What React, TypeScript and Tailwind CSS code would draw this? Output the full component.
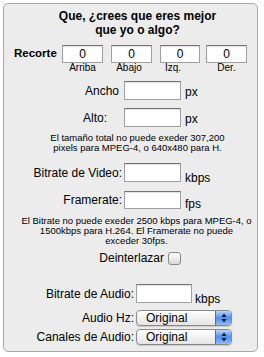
import type { ReactNode } from 'react';

const Box = ({ w, h, children }: { w: string; h: string; children?: ReactNode }) => (
  <div className={`${w} ${h} flex items-center justify-center border border-[#a0a0a0] border-t-[#737373] bg-white text-[12px] leading-none shadow-[inset_0_1px_1px_rgba(0,0,0,0.12)]`}>
    {children}
  </div>
);

const PopUp = () => (
  <div className="flex h-[16px] w-[96px] rounded-[4px] border border-[#8a8a8a] bg-gradient-to-b from-white to-[#e4e4e4] shadow-[0_1px_1px_rgba(0,0,0,0.15)]">
    <span className="flex-1 pl-[9px] text-[12px] leading-[14px]">Original</span>
    <span className="flex w-[16px] items-center justify-center rounded-r-[3px] border-l border-[#3f6fb8] bg-gradient-to-b from-[#b6d5fb] via-[#4d8ef0] to-[#8fbdf8]">
      <svg width="6" height="10" viewBox="0 0 6 10">
        <path d="M3 0.5 L5.6 4 L0.4 4 Z" fill="#101830" />
        <path d="M3 9.5 L5.6 6 L0.4 6 Z" fill="#101830" />
      </svg>
    </span>
  </div>
);

export default function App() {
  return (
    <div className="h-[357px] w-[264px] bg-white pl-[3px] pt-[3px] text-black" style={{ fontFamily: '"Liberation Sans", Arial, sans-serif' }}>
      <div className="h-[349px] w-[255px] rounded-[5px] border border-[#a9a9a9] bg-[#ececec]">
        <div className="mt-[5px] pl-[14px] text-center text-[12px] font-bold leading-[14px]">
          <div>Que, ¿crees que eres mejor</div>
          <div>que yo o algo?</div>
        </div>

        {/* recorte */}
        <div className="mt-[8px] flex pl-[10px]">
          <div className="flex h-[18px] w-[48px] items-center text-[11.5px] font-bold">Recorte</div>
          <div className="flex flex-col items-center">
            <Box w="w-[41px]" h="h-[18px]">0</Box>
            <span className="text-[10px] leading-[10px]">Arriba</span>
          </div>
          <div className="ml-[8px] flex flex-col items-center">
            <Box w="w-[41px]" h="h-[18px]">0</Box>
            <span className="pr-[5px] text-[10px] leading-[10px]">Abajo</span>
          </div>
          <div className="ml-[8px] flex flex-col items-center">
            <Box w="w-[40px]" h="h-[18px]">0</Box>
            <span className="pr-[14px] text-[10px] leading-[10px]">Izq.</span>
          </div>
          <div className="ml-[6px] flex flex-col items-center">
            <Box w="w-[41px]" h="h-[18px]">0</Box>
            <span className="text-[10px] leading-[10px]">Der.</span>
          </div>
        </div>

        <div className="mt-[8px] flex items-end">
          <span className="mb-[2px] w-[115px] text-right text-[12px] leading-[14px]">Ancho</span>
          <span className="ml-[5px]"><Box w="w-[57px]" h="h-[19px]" /></span>
          <span className="ml-[4px] mb-[1px] text-[12px] leading-[14px]">px</span>
        </div>
        <div className="mt-[8px] flex items-end">
          <span className="mb-[2px] w-[103px] text-right text-[12px] leading-[14px]">Alto:</span>
          <span className="ml-[17px]"><Box w="w-[57px]" h="h-[19px]" /></span>
          <span className="ml-[4px] mb-[1px] text-[12px] leading-[14px]">px</span>
        </div>

        <div className="mt-[6px] pl-[14px] text-center text-[9.5px] leading-[10px]">
          <div>El tamaño total no puede exeder 307,200</div>
          <div>pixels para MPEG-4, o 640x480 para H.</div>
        </div>

        <div className="mt-[10px] flex items-center">
          <span className="w-[118px] text-right text-[12px] leading-[14px]">Bitrate de Video:</span>
          <span className="ml-[2px]"><Box w="w-[57px]" h="h-[19px]" /></span>
          <span className="mb-[-3px] ml-[4px] self-end text-[12px] leading-[14px]">kbps</span>
        </div>
        <div className="mt-[9px] flex items-center">
          <span className="w-[118px] text-right text-[12px] leading-[14px]">Framerate:</span>
          <span className="ml-[2px]"><Box w="w-[57px]" h="h-[18px]" /></span>
          <span className="mb-[-2px] ml-[4px] self-end text-[12px] leading-[14px]">fps</span>
        </div>

        <div className="mt-[7px] pl-[12px] text-center text-[9.5px] leading-[10px]">
          <div>El Bitrate no puede exeder 2500 kbps para MPEG-4, o</div>
          <div>1500kbps para H.264. El Framerate no puede</div>
          <div>exceder 30fps.</div>
        </div>

        <div className="mt-[5px] flex items-center">
          <span className="w-[160px] text-right text-[12px] leading-[14px]">Deinterlazar</span>
          <span className="ml-[4px] h-[13px] w-[13px] rounded-[3px] border border-[#8a8a8a] bg-gradient-to-b from-white to-[#d8d8d8]" />
        </div>

        <div className="mt-[19px] flex items-center">
          <span className="w-[130px] text-right text-[12px] leading-[14px]">Bitrate de Audio:</span>
          <span className="ml-[2px]"><Box w="w-[56px]" h="h-[19px]" /></span>
          <span className="mb-[-3px] ml-[3px] self-end text-[12px] leading-[14px]">kbps</span>
        </div>
        <div className="mt-[7px] flex items-center">
          <span className="w-[130px] text-right text-[12px] leading-[14px]">Audio Hz:</span>
          <span className="ml-[2px]"><PopUp /></span>
        </div>
        <div className="mt-[3px] flex items-center">
          <span className="w-[130px] text-right text-[12px] leading-[14px]">Canales de Audio:</span>
          <span className="ml-[2px]"><PopUp /></span>
        </div>
      </div>
    </div>
  );
}
